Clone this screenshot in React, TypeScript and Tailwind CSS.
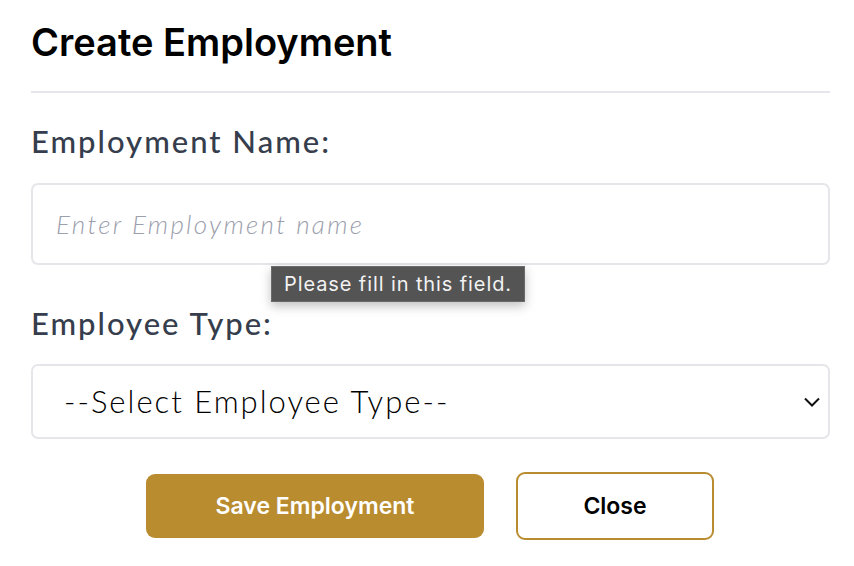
import React from "react";

export default function App() {
  return (
    <div className="w-[854px] h-[566px] bg-white overflow-hidden">
      <div className="px-[31px] pt-[18px] flex flex-col">
        <h1 className="text-[38px] leading-[48px] font-semibold text-black [font-family:Inter,'Liberation_Sans',sans-serif]">
          Create Employment
        </h1>
        <div className="mt-[25px] h-[2px] w-[799px] bg-[#e5e5ea]" />
        <label className="mt-[30px] text-[31px] leading-[36px] font-medium tracking-[2px] text-[#363d4c] [font-family:Lato,'Open_Sans',sans-serif]">
          Employment Name:
        </label>
        <div className="relative mt-[24px]">
          <div className="h-[82px] w-[799px] rounded-[7px] border-2 border-[#e6e6ea] flex items-center pl-[23px]">
            <span className="text-[26px] italic font-light tracking-[2.3px] text-[#9ca0ad] [font-family:Lato,'Open_Sans',sans-serif]">
              Enter Employment name
            </span>
          </div>
          <div className="absolute left-[240px] top-[83px] h-[36px] px-[12px] flex items-center bg-[#545454] border border-[#6a6a6a] shadow-[0_4px_10px_rgba(0,0,0,0.25)]">
            <span className="text-[20px] tracking-[0.9px] text-[#f2f2f2] [font-family:Inter,'Liberation_Sans',sans-serif]">
              Please fill in this field.
            </span>
          </div>
        </div>
        <label className="mt-[40px] text-[31px] leading-[36px] font-medium tracking-[2px] text-[#363d4c] [font-family:Lato,'Open_Sans',sans-serif]">
          Employee Type:
        </label>
        <div className="mt-[23px] h-[75px] w-[799px] rounded-[7px] border-2 border-[#e6e6ea] flex items-center justify-between pl-[31px] pr-[8px]">
          <span className="text-[31px] font-light tracking-[2px] text-black [font-family:Lato,'Open_Sans',sans-serif]">
            --Select Employee Type--
          </span>
          <svg width="16" height="10" viewBox="0 0 16 10" fill="none">
            <path d="M1 1.5 L8 8.5 L15 1.5" stroke="#111" strokeWidth="2" />
          </svg>
        </div>
        <div className="mt-[33px] pl-[6px] flex justify-center gap-[32px] items-center">
          <button className="w-[338px] h-[64px] rounded-[9px] bg-[#b98c30] text-white text-[23px] font-semibold [font-family:Inter,'Liberation_Sans',sans-serif]">
            Save Employment
          </button>
          <button className="w-[198px] h-[68px] rounded-[9px] border-2 border-[#b98c30] bg-white text-black text-[23px] font-semibold [font-family:Inter,'Liberation_Sans',sans-serif]">
            Close
          </button>
        </div>
      </div>
    </div>
  );
}
